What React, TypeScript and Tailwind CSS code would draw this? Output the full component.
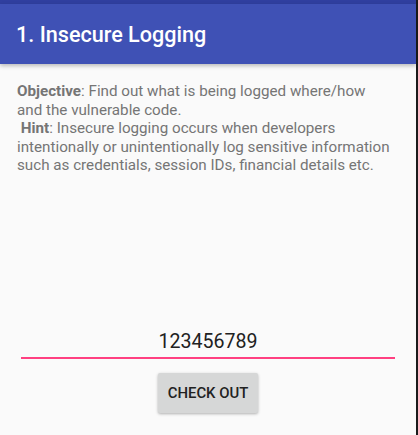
import React from "react";

export default function App() {
  return (
    <div
      className="w-[418px] h-[435px] flex bg-[#1b1b1b] overflow-hidden"
      style={{ fontFamily: "Roboto, 'Noto Sans', sans-serif" }}
    >
      <div className="w-[416px] h-full flex flex-col bg-[#fafafa]">
        <div className="h-[4px] bg-[#303f9f]" />
        <div className="h-[60px] bg-[#3f51b5] flex items-center px-[16px] shadow-[0_2px_4px_rgba(0,0,0,0.25)] relative z-10">
          <span className="text-white text-[21.6px] font-medium pt-[2px]">1. Insecure Logging</span>
        </div>
        <div className="pl-[17px] pr-[25px] pt-[18px] text-[15.2px] leading-[18.5px] text-[#757575]">
          <span className="font-bold">Objective</span>: Find out what is being logged where/how and the vulnerable code.
          <br />
          &nbsp;<span className="font-bold">Hint</span>: Insecure logging occurs when developers intentionally or unintentionally log sensitive information such as credentials, session IDs, financial details etc.
        </div>
        <div className="flex-1" />
        <div className="px-[21px] flex flex-col items-center">
          <div className="w-full text-center text-[19.6px] leading-[22px] text-[#212121] pb-[4px] border-b-2 border-[#ff4081]">
            123456789
          </div>
          <div className="mt-[14px] mb-[22px] w-[100px] h-[40px] rounded-[2px] bg-[#d6d7d7] shadow-[0_1px_3px_rgba(0,0,0,0.3)] flex items-center justify-center text-[14.9px] font-medium text-[#212121]">
            CHECK OUT
          </div>
        </div>
      </div>
    </div>
  );
}
